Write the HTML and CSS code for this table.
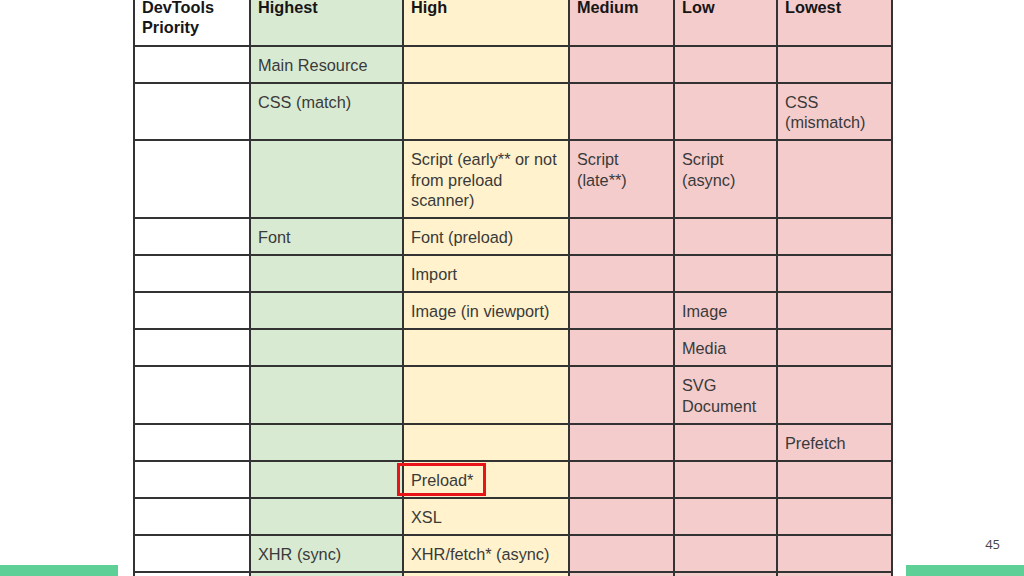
FILE: index.html
```html
<!DOCTYPE html>
<html>
<head>
<meta charset="utf-8">
<link rel="stylesheet" href="styles.css">
</head>
<body>
<div class="slide">
  <div class="side side-left">
    <div class="bar"></div>
  </div>
  <div class="table">
    <div class="c c0 h">DevTools Priority</div>
    <div class="c c1 h">Highest</div>
    <div class="c c2 h">High</div>
    <div class="c c3 h">Medium</div>
    <div class="c c4 h">Low</div>
    <div class="c c5 h">Lowest</div>

    <div class="c c0"></div>
    <div class="c c1">Main Resource</div>
    <div class="c c2"></div>
    <div class="c c3"></div>
    <div class="c c4"></div>
    <div class="c c5"></div>

    <div class="c c0"></div>
    <div class="c c1">CSS (match)</div>
    <div class="c c2"></div>
    <div class="c c3"></div>
    <div class="c c4"></div>
    <div class="c c5">CSS<br>(mismatch)</div>

    <div class="c c0"></div>
    <div class="c c1"></div>
    <div class="c c2">Script (early** or not<br>from preload<br>scanner)</div>
    <div class="c c3">Script<br>(late**)</div>
    <div class="c c4">Script<br>(async)</div>
    <div class="c c5"></div>

    <div class="c c0"></div>
    <div class="c c1">Font</div>
    <div class="c c2">Font (preload)</div>
    <div class="c c3"></div>
    <div class="c c4"></div>
    <div class="c c5"></div>

    <div class="c c0"></div>
    <div class="c c1"></div>
    <div class="c c2">Import</div>
    <div class="c c3"></div>
    <div class="c c4"></div>
    <div class="c c5"></div>

    <div class="c c0"></div>
    <div class="c c1"></div>
    <div class="c c2">Image (in viewport)</div>
    <div class="c c3"></div>
    <div class="c c4">Image</div>
    <div class="c c5"></div>

    <div class="c c0"></div>
    <div class="c c1"></div>
    <div class="c c2"></div>
    <div class="c c3"></div>
    <div class="c c4">Media</div>
    <div class="c c5"></div>

    <div class="c c0"></div>
    <div class="c c1"></div>
    <div class="c c2"></div>
    <div class="c c3"></div>
    <div class="c c4">SVG<br>Document</div>
    <div class="c c5"></div>

    <div class="c c0"></div>
    <div class="c c1"></div>
    <div class="c c2"></div>
    <div class="c c3"></div>
    <div class="c c4"></div>
    <div class="c c5">Prefetch</div>

    <div class="c c0"></div>
    <div class="c c1"></div>
    <div class="c c2"><span class="mark">Preload*</span></div>
    <div class="c c3"></div>
    <div class="c c4"></div>
    <div class="c c5"></div>

    <div class="c c0"></div>
    <div class="c c1"></div>
    <div class="c c2">XSL</div>
    <div class="c c3"></div>
    <div class="c c4"></div>
    <div class="c c5"></div>

    <div class="c c0"></div>
    <div class="c c1">XHR (sync)</div>
    <div class="c c2">XHR/fetch* (async)</div>
    <div class="c c3"></div>
    <div class="c c4"></div>
    <div class="c c5"></div>

    <div class="c c0"></div>
    <div class="c c1">&nbsp;</div>
    <div class="c c2"></div>
    <div class="c c3"></div>
    <div class="c c4"></div>
    <div class="c c5"></div>
  </div>
  <div class="side side-right">
    <div class="page-num">45</div>
    <div class="bar"></div>
  </div>
</div>
</body>
</html>
```

FILE: styles.css
```css
html, body {
  margin: 0;
  padding: 0;
  background: #ffffff;
}

.slide {
  width: 1024px;
  height: 576px;
  overflow: hidden;
  display: grid;
  grid-template-columns: 133px 760px 131px;
  grid-template-rows: 576px;
  font-family: "Liberation Sans", Arial, sans-serif;
}

.side {
  display: flex;
  flex-direction: column;
  justify-content: flex-end;
  height: 576px;
}

.bar {
  height: 11px;
  width: 118px;
  background: #5ecf96;
  flex: none;
}

.side-right .bar {
  margin-left: 13px;
}

.page-num {
  font-family: "Open Sans", "Liberation Sans", sans-serif;
  font-size: 13px;
  line-height: 16px;
  color: #444444;
  text-align: right;
  padding-right: 24px;
  margin-bottom: 13px;
}

.table {
  margin-top: -13px;
  align-self: start;
  display: grid;
  grid-template-columns: 116px 153px 166px 105px 103px 115px;
  border-left: 2px solid #333333;
  border-top: 2px solid #333333;
}

.c {
  border-right: 2px solid #333333;
  border-bottom: 2px solid #333333;
  padding: 8px 6px 6.7px 7px;
  font-size: 16.3px;
  line-height: 20.4px;
  color: #3a3a3a;
  white-space: nowrap;
}

.c.h {
  font-weight: bold;
  color: #161616;
  white-space: normal;
}

.c0 { background: #ffffff; }
.c1 { background: #d9ead3; }
.c2 { background: #fff2cc; }
.c3, .c4, .c5 { background: #f4cccc; }

.mark {
  position: relative;
  display: inline-block;
}

.mark::after {
  content: "";
  position: absolute;
  left: -14px;
  right: -13px;
  top: -7px;
  bottom: -6px;
  border: 3px solid #e8141a;
}
```
